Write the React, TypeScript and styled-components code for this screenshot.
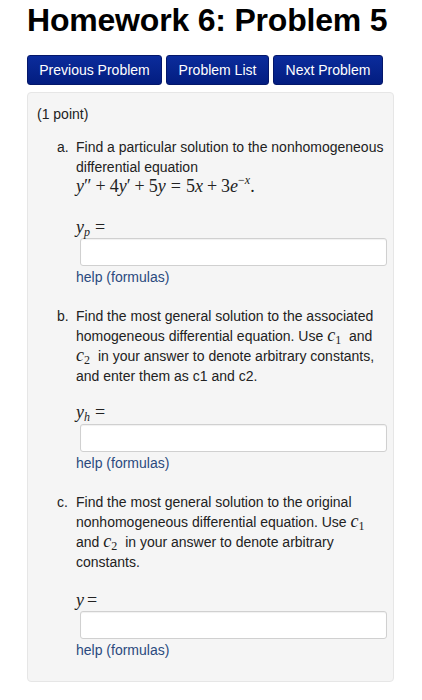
import React from "react";
import styled, { createGlobalStyle } from "styled-components";

const Global = createGlobalStyle`
  html, body {
    margin: 0;
    padding: 0;
    background: #ffffff;
  }
  body {
    font-family: "Liberation Sans", Arial, sans-serif;
    color: #222;
  }
`;

const Page = styled.div`
  width: 422px;
  padding: 0 28px 0 27px;
  box-sizing: border-box;
`;

const Title = styled.h1`
  margin: 0;
  padding-top: 3px;
  font-size: 32px;
  line-height: 34px;
  font-weight: 700;
  color: #000;
  letter-spacing: -0.2px;
`;

const ButtonRow = styled.div`
  display: flex;
  gap: 4px;
  margin-top: 18px;
`;

const NavButton = styled.button<{ $w: number }>`
  width: ${(p) => p.$w}px;
  height: 30px;
  padding: 0;
  border: 1px solid #04176a;
  border-radius: 3px;
  background: linear-gradient(#0b2c9c, #031d80);
  color: #fff;
  font-family: "Liberation Sans", Arial, sans-serif;
  font-size: 14px;
  cursor: pointer;
`;

const Panel = styled.div`
  margin-top: 7px;
  padding: 11px 8px 21px 9px;
  background: #f5f5f5;
  border: 1px solid #e6e6e6;
  border-radius: 4px;
  font-size: 14px;
  line-height: 20px;
`;

const Points = styled.div`
  color: #222;
`;

const Part = styled.div<{ $gap: number }>`
  display: flex;
  margin-top: ${(p) => p.$gap}px;
  padding-left: 20px;
`;

const Marker = styled.div`
  width: 19px;
  flex: none;
`;

const Body = styled.div`
  flex: 1;
`;

const Math = styled.span`
  font-family: "Liberation Serif", "Times New Roman", serif;
  font-style: italic;
  font-size: 18px;
  line-height: 0;
`;

const Num = styled.span`
  font-style: normal;
`;

const Op = styled.span<{ $space: number }>`
  font-style: normal;
  padding: 0 ${(p) => p.$space}px;
`;

const Sub = styled.sub<{ $italic?: boolean; $after?: number }>`
  font-style: ${(p) => (p.$italic ? "italic" : "normal")};
  font-size: 12px;
  vertical-align: -3px;
  line-height: 0;
  padding-right: ${(p) => p.$after ?? 0}px;
`;

const Sup = styled.sup`
  font-size: 12px;
  vertical-align: 8px;
  line-height: 0;
`;

const AnswerLabel = styled.div<{ $gap: number }>`
  margin-top: ${(p) => p.$gap}px;
  height: 20px;
`;

const AnswerInput = styled.input<{ $gap?: number }>`
  display: block;
  box-sizing: border-box;
  width: 307px;
  height: 28px;
  margin: ${(p) => p.$gap ?? 0}px 0 0 4px;
  border: 1px solid #d0d0d0;
  border-radius: 3px;
  background: #fff;
  box-shadow: inset 0 1px 1px rgba(0, 0, 0, 0.06);
`;

const Help = styled.a`
  display: block;
  color: #2a4a7e;
  text-decoration: none;
  margin-top: 1px;
`;

const C = ({ n }: { n: number }) => (
  <Math>
    c<Sub $after={4}>{n}</Sub>
  </Math>
);

export default function App() {
  return (
    <Page>
      <Global />
      <Title>Homework 6: Problem 5</Title>
      <ButtonRow>
        <NavButton $w={135}>Previous Problem</NavButton>
        <NavButton $w={103}>Problem List</NavButton>
        <NavButton $w={110}>Next Problem</NavButton>
      </ButtonRow>
      <Panel>
        <Points>(1 point)</Points>

        <Part $gap={13}>
          <Marker>a.</Marker>
          <Body>
            Find a particular solution to the nonhomogeneous differential
            equation
            <br />
            <Math>
              y<Num>″</Num>
              <Op $space={4}>+</Op>
              <Num>4</Num>y<Num>′</Num>
              <Op $space={4}>+</Op>
              <Num>5</Num>y<Op $space={5}>=</Op>
              <Num>5</Num>x<Op $space={4}>+</Op>
              <Num>3</Num>e
              <Sup>
                <Num>−</Num>x
              </Sup>
              <Num>.</Num>
            </Math>
            <AnswerLabel $gap={21}>
              <Math>
                y<Sub $italic>p</Sub>
                <Op $space={5}>=</Op>
              </Math>
            </AnswerLabel>
            <AnswerInput type="text" />
            <Help href="#">help (formulas)</Help>
          </Body>
        </Part>

        <Part $gap={19}>
          <Marker>b.</Marker>
          <Body>
            Find the most general solution to the associated homogeneous
            differential equation. Use <C n={1} /> and <C n={2} /> in your
            answer to denote arbitrary constants, and enter them as c1 and c2.
            <AnswerLabel $gap={17}>
              <Math>
                y<Sub $italic>h</Sub>
                <Op $space={5}>=</Op>
              </Math>
            </AnswerLabel>
            <AnswerInput type="text" $gap={1} />
            <Help href="#">help (formulas)</Help>
          </Body>
        </Part>

        <Part $gap={19}>
          <Marker>c.</Marker>
          <Body>
            Find the most general solution to the original nonhomogeneous
            differential equation. Use <C n={1} /> and <C n={2} /> in your
            answer to denote arbitrary constants.
            <AnswerLabel $gap={19}>
              <Math>
                y<Op $space={3}>=</Op>
              </Math>
            </AnswerLabel>
            <AnswerInput type="text" />
            <Help href="#">help (formulas)</Help>
          </Body>
        </Part>
      </Panel>
    </Page>
  );
}
